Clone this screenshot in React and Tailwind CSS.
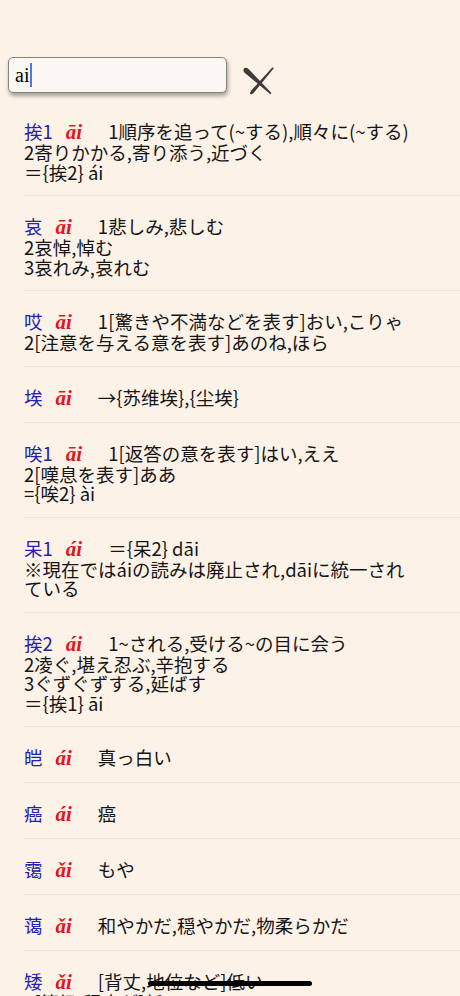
import React from "react";

const entries = [
  { h: "挨1", p: "āi", first: "1順序を追って(~する),順々に(~する)", rest: ["2寄りかかる,寄り添う,近づく", "＝{挨2} ái"] },
  { h: "哀", p: "āi", first: "1悲しみ,悲しむ", rest: ["2哀悼,悼む", "3哀れみ,哀れむ"] },
  { h: "哎", p: "āi", first: "1[驚きや不満などを表す]おい,こりゃ", rest: ["2[注意を与える意を表す]あのね,ほら"] },
  { h: "埃", p: "āi", first: "→{苏维埃},{尘埃}", rest: [] },
  { h: "唉1", p: "āi", first: "1[返答の意を表す]はい,ええ", rest: ["2[嘆息を表す]ああ", "={唉2} ài"] },
  { h: "呆1", p: "ái", first: "＝{呆2} dāi", rest: ["※現在ではáiの読みは廃止され,dāiに統一され", "ている"] },
  { h: "挨2", p: "ái", first: "1~される,受ける~の目に会う", rest: ["2凌ぐ,堪え忍ぶ,辛抱する", "3ぐずぐずする,延ばす", "＝{挨1} āi"] },
  { h: "皑", p: "ái", first: "真っ白い", rest: [] },
  { h: "癌", p: "ái", first: "癌", rest: [] },
  { h: "霭", p: "ǎi", first: "もや", rest: [] },
  { h: "蔼", p: "ǎi", first: "和やかだ,穏やかだ,物柔らかだ", rest: [] },
  { h: "矮", p: "ǎi", first: "[背丈,地位など]低い", rest: ["2[等級,程度が]低い"] },
];

function CloseMark() {
  return (
    <svg width="34" height="33" viewBox="0 0 34 33" className="ml-[14px] mt-[7px] shrink-0">
      <path
        d="M2.5 6 C2.5 3.5 5.5 3 7.5 5 L30 28.5 C30.8 29.5 30 30.5 29 30 L4.5 9.5 C3 8.5 2.5 7.5 2.5 6 Z"
        fill="#3c3c3c"
      />
      <path
        d="M31.5 3.5 C32.5 3.3 33 4 32.6 4.6 L13 28.5 C11.5 30.5 9 31 9 29.3 C9 27.8 10.5 26.3 12 24.5 L30.8 4 Z"
        fill="#3c3c3c"
      />
    </svg>
  );
}

export default function App() {
  return (
    <div
      className="relative h-[996px] w-[460px] overflow-hidden bg-[#fdf2e8] text-[#151515]"
      style={{ fontFamily: '"Noto Sans CJK JP", "Noto Sans", sans-serif' }}
    >
      <div className="flex h-[101px] items-start pl-[8px] pt-[57px]">
        <div className="flex h-[36px] w-[219px] items-center rounded-[5px] border-[1.5px] border-[#86837f] bg-[#fbf7f2] pl-[6px] shadow-[1px_3px_4px_rgba(0,0,0,0.35)]">
          <span
            className="text-[20px] leading-[24px] text-black"
            style={{ fontFamily: '"Liberation Serif", "DejaVu Serif", serif' }}
          >
            ai
          </span>
          <span className="ml-[1px] inline-block h-[24px] w-[2px] bg-[#4a78e6]" />
        </div>
        <CloseMark />
      </div>

      <div className="ml-[24px]">
        {entries.map((e, i) => (
          <div key={i} className="border-b border-[#f1e3d6] pt-[18px] pb-[13px] text-[18.5px]">
            <div className="h-[24px] whitespace-nowrap leading-[24px]">
              <span className="text-[#2222b0]">{e.h}</span>
              <span
                className="ml-[13px] text-[21px] font-bold italic text-[#e3141c]"
                style={{ fontFamily: '"Liberation Serif", serif' }}
              >
                {e.p}
              </span>
              <span className="ml-[26px]">{e.first}</span>
            </div>
            {e.rest.map((r, j) => (
              <div key={j} className="h-[19.5px] whitespace-nowrap leading-[19.5px]">
                {r}
              </div>
            ))}
          </div>
        ))}
      </div>

      <div className="absolute bottom-[10px] left-[148px] h-[5px] w-[164px] rounded-full bg-black" />
    </div>
  );
}
